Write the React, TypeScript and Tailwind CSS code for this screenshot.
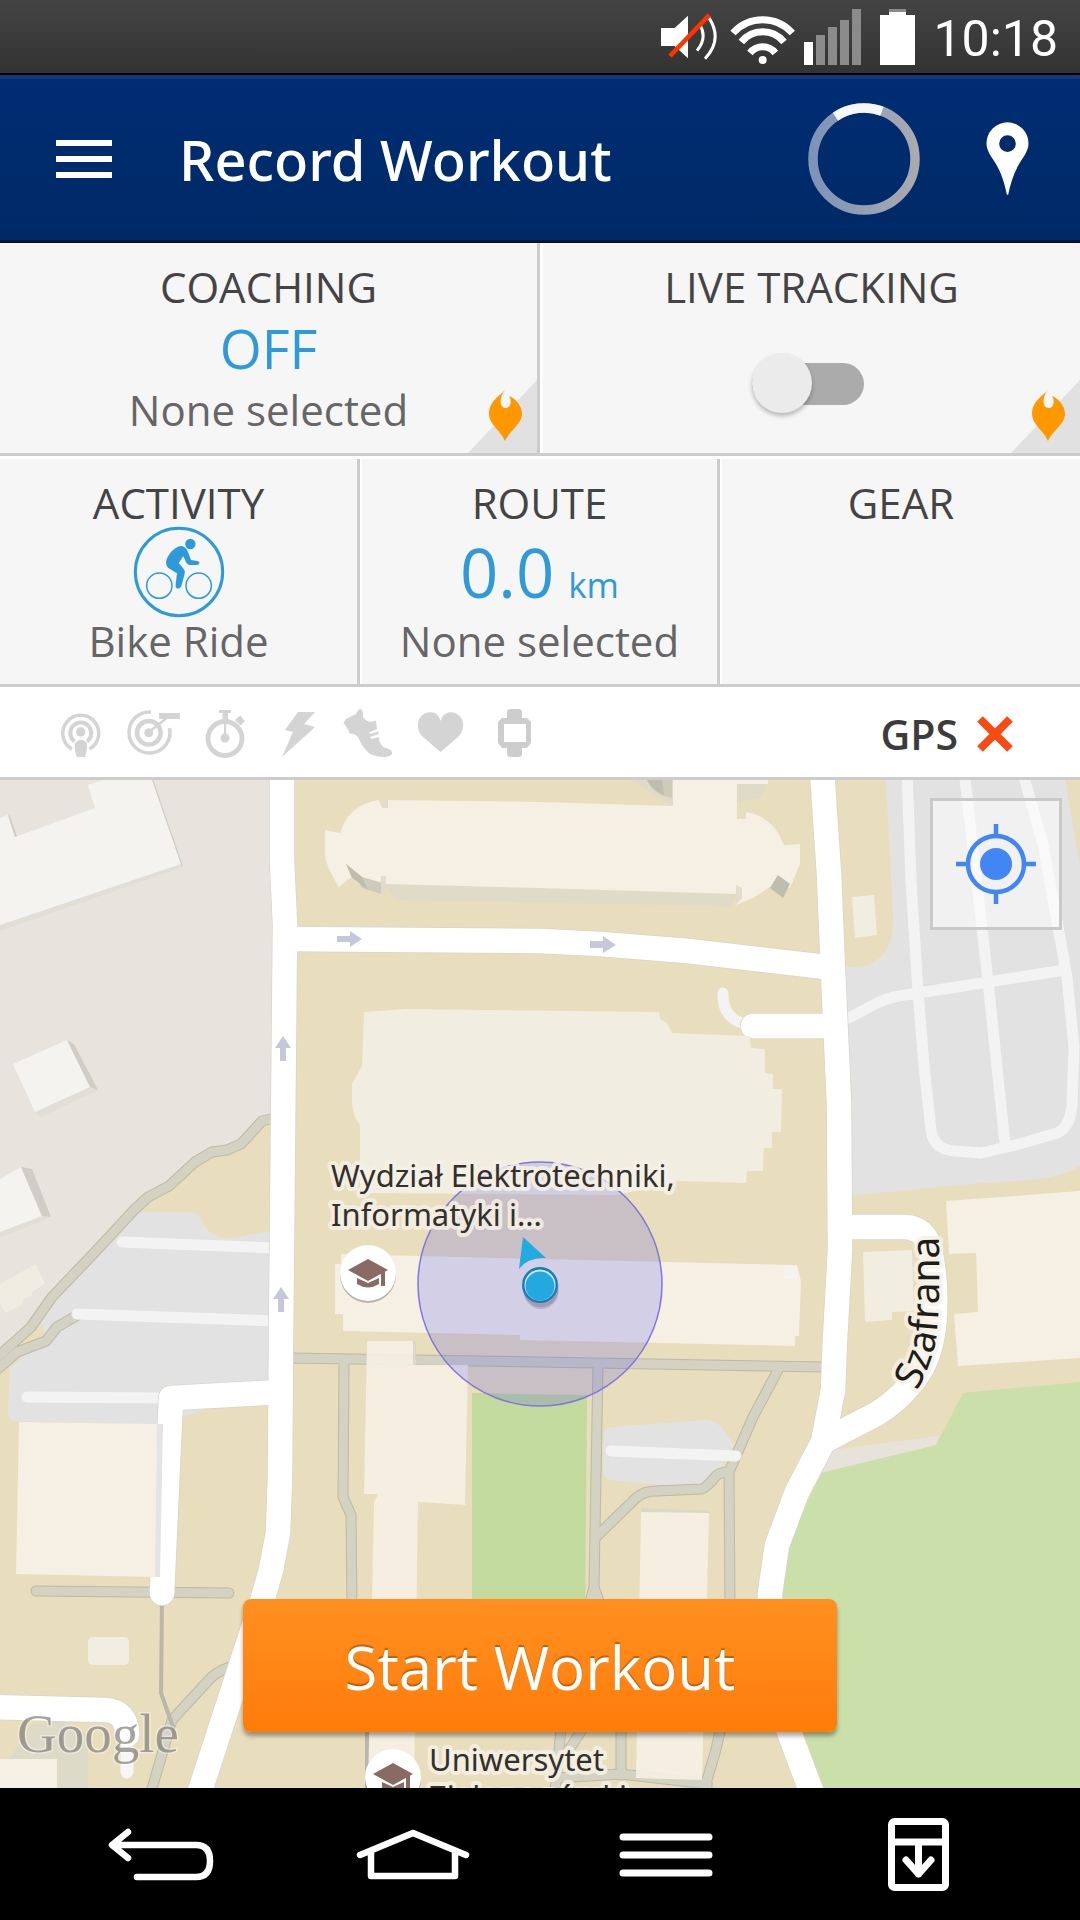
import React from "react";

const sans = "font-['Open_Sans','Noto_Sans',sans-serif]";

function StatusBar() {
  return (
    <div className="flex h-[75px] items-start justify-end border-b-2 border-black bg-linear-to-b from-[#444444] to-[#333333] pr-[22px] text-white">
      <svg viewBox="60 0 174 219" className="mr-3 h-[73px] w-[58px]" role="img" aria-label="Sound off">
        <path fill="#fff" d="M63 84H104L144 47V175L104 138H63Z" />
        <path fill="none" stroke="#fff" strokeWidth="9" d="M178 72Q204 112 171 152M206 52Q250 118 195 176" />
        <path stroke="#ff3300" strokeWidth="14" d="M90 168L208 45" />
      </svg>
      <svg viewBox="270 0 198 219" className="mr-2 h-[73px] w-[66px]" role="img" aria-label="Wi-Fi">
        <g fill="none" stroke="#fff" strokeWidth="21">
          <path d="M279 99A119 119 0 0 1 457 99" />
          <path d="M304 126A82 82 0 0 1 432 126" />
          <path d="M330 159A48 48 0 0 1 406 159" />
        </g>
        <circle cx="368" cy="180" r="12" fill="#fff" />
      </svg>
      <svg viewBox="492 0 171 219" className="mr-[19px] h-[73px] w-[57px]" role="img" aria-label="Signal strength">
        <path fill="#fff" d="M492 126h27v69h-27z" />
        <path fill="#8b8b8b" d="M528 105h27v90h-27zM564 81h27v114h-27zM600 60h27v135h-27zM636 27h27v168h-27z" />
      </svg>
      <svg viewBox="720 0 105 219" className="mr-[18px] h-[73px] w-[35px]" role="img" aria-label="Battery">
        <path fill="#8b8b8b" d="M747 27h51v9h-51z" />
        <path fill="#fff" d="M747 36h51v9h27v150H720V45h27z" />
      </svg>
      <span className="font-[Roboto,sans-serif] text-[50px] leading-[79px]">10:18</span>
    </div>
  );
}

function Header() {
  return (
    <header className="flex h-[168px] items-center border-t-4 border-b-[3px] border-t-[#17377a] border-b-[#011434] bg-linear-to-b from-[#002d73] to-[#002966] pr-[51px] pb-0.5 pl-14 text-white">
      <button type="button" aria-label="Menu" className="flex flex-col gap-2.5">
        <span className="h-1.5 w-14 bg-white" />
        <span className="h-1.5 w-14 bg-white" />
        <span className="h-1.5 w-14 bg-white" />
      </button>
      <h1 className="ml-[67px] flex-1 text-[56px] leading-[76px] font-medium font-['Noto_Sans','Open_Sans',sans-serif]">Record Workout</h1>
      <svg viewBox="0 0 112 112" className="mr-[66px] w-28" role="img" aria-label="Loading">
        <defs>
          <linearGradient id="ring" x1="0" x2="1" y1="0" y2="0">
            <stop offset="0" stopColor="#7d93b8" />
            <stop offset="1" stopColor="#aaaaaf" />
          </linearGradient>
        </defs>
        <circle cx="56" cy="56" r="51" fill="none" stroke="url(#ring)" strokeWidth="9.5" />
        <path fill="none" stroke="#f6f7f9" strokeWidth="9.5" d="M27.500 13.700A51 51 0 0 1 73.900 8.200" />
      </svg>
      <button type="button" aria-label="Show location">
        <svg viewBox="590 97 128 222" className="h-[74px] w-[43px]">
          <path fill="#fff" fillRule="evenodd" d="M654 98A63 63 0 0 1 717 161C717 183 704 199 690 221C672 250 662 285 656 315H652C646 285 636 250 618 221C604 199 591 183 591 161A63 63 0 0 1 654 98ZM654 137a25 25 0 1 0 0 50a25 25 0 1 0 0-50Z" />
        </svg>
      </button>
    </header>
  );
}

function FlameCorner() {
  return (
    <svg viewBox="0 0 69 73" className="absolute right-0 bottom-0 h-[73px] w-[69px]" aria-hidden="true">
      <path fill="#e1e1e1" d="M69 0V73H0Z" />
      <path fill="#ff9800" d="M37 10C32 16 21 21 21 34C21 44 32 50 37 61C42 50 54 44 54 34C54 26 47 18 41 16C44 20 43 28 38 28C31 28 31 17 37 10Z" />
    </svg>
  );
}

function BikeIcon() {
  return (
    <svg viewBox="36 30 276 276" className="w-[92px] shrink-0" aria-hidden="true">
      <g fill="none" stroke="#2f9ad9">
        <circle cx="174" cy="168" r="131" strokeWidth="9" />
        <circle cx="115" cy="209" r="38" strokeWidth="4.500" />
        <circle cx="233" cy="209" r="38" strokeWidth="4.500" />
      </g>
      <circle cx="208" cy="84" r="15.500" fill="#2f9ad9" />
      <path fill="#2f9ad9" d="M163 97Q178 87 189 92Q198 97 202 110L210 132L229 135Q237 137 235 142Q233 148 227 147L205 147Q198 146 195 139L187 121L173 141L186 156Q193 164 191 173L181 211Q176 220 167 217Q162 213 164 205L168 172L143 157Q133 148 136 133Q144 110 163 97Z" />
    </svg>
  );
}

const title = "block text-[42px] leading-[62px] text-[#444444]";
const note = "block text-[42px] leading-[62px] text-[#666666]";

function Panels() {
  return (
    <>
      <section className="grid grid-cols-2 border-b-[3px] border-[#cccccc] bg-[#f6f6f6]">
        <button type="button" className="relative border-r-[3px] border-[#cccccc] pt-[13px] pb-3 text-center">
          <span className={title}>COACHING</span>
          <span className="block text-[54px] leading-[61px] text-[#2f9ad9]">OFF</span>
          <span className={note}>None selected</span>
          <FlameCorner />
        </button>
        <div className="relative flex flex-col items-center border-l-[3px] border-white pt-[13px] pb-3">
          <label htmlFor="live" className={title}>LIVE TRACKING</label>
          <div className="relative mt-[21px] mr-2 h-[90px] w-28 pt-6">
            <input id="live" type="checkbox" role="switch" className="peer block h-[42px] w-28 appearance-none rounded-full bg-[#ababab]" />
            <span className="pointer-events-none absolute top-[14px] left-0 size-[60px] rounded-full bg-[#ebebeb] shadow-[0_3px_4px_rgba(0,0,0,0.25)] peer-checked:left-[52px]" />
          </div>
          <FlameCorner />
        </div>
      </section>
      <section className="grid grid-cols-3 border-t-[3px] border-b-[3px] border-t-white border-b-[#cccccc] bg-[#f6f6f6]">
        <button type="button" className="border-r-[3px] border-[#cccccc] pt-[13px] pb-3">
          <span className={title}>ACTIVITY</span>
          <span className="flex h-[76px] items-center justify-center"><BikeIcon /></span>
          <span className={note}>Bike Ride</span>
        </button>
        <button type="button" className="border-r-[3px] border-l-2 border-r-[#cccccc] border-l-white pt-[13px] pb-3">
          <span className={title}>ROUTE</span>
          <span className="flex h-[76px] items-baseline justify-center gap-3.5 text-[#2f9ad9]">
            <span className="text-[67px] leading-[76px]">0.0</span>
            <span className="text-[35px] leading-[40px]">km</span>
          </span>
          <span className={note}>None selected</span>
        </button>
        <button type="button" className="flex items-start justify-center border-l-2 border-white pt-[13px] pb-3">
          <span className={title}>GEAR</span>
        </button>
      </section>
    </>
  );
}

function SensorBar() {
  const cell = "h-[90px] w-[72px]";
  return (
    <section className="flex items-center border-b-[3px] border-[#cccccc] bg-white pr-[66px] pl-[45px] text-[#d4d4d4]">
      <svg viewBox="45 687 72 90" className={cell} role="img" aria-label="Broadcast">
        <g fill="none" stroke="currentColor">
          <path strokeWidth="3.500" d="M72 749A18 18 0 1 1 89.500 749" />
          <path strokeWidth="4" d="M74.500 741.500A10.500 10.500 0 1 1 87 741.500" />
        </g>
        <circle cx="80.700" cy="732" r="4.700" fill="currentColor" />
        <path fill="currentColor" d="M75 743Q81 736.500 87 743Q87.500 750 85 757H77Q74 750 75 743Z" />
      </svg>
      <svg viewBox="117 687 72 90" className={cell} role="img" aria-label="Cadence">
        <g fill="none" stroke="currentColor">
          <path strokeWidth="3.500" d="M151 712A20.500 20.500 0 1 0 169.500 728" />
          <circle cx="148.800" cy="732.700" r="11.800" strokeWidth="4.500" />
          <path strokeWidth="2.500" d="M149 732L168 717" />
        </g>
        <circle cx="148.800" cy="732.700" r="4.500" fill="currentColor" />
        <path fill="currentColor" d="M159 713h21v6h-21z" />
      </svg>
      <svg viewBox="189 687 72 90" className={cell} role="img" aria-label="Timer">
        <circle cx="225" cy="738.500" r="17" fill="none" stroke="currentColor" strokeWidth="4.800" />
        <path fill="currentColor" d="M219 710h12v3h-3v7h-5.500v-7H219zM235 720l5-4.500l5 5.500l-4.500 4.500zM224 719h2.200v17h-2.200z" />
        <circle cx="225" cy="738" r="4.500" fill="currentColor" />
      </svg>
      <svg viewBox="261 687 72 90" className={cell} role="img" aria-label="Power">
        <path fill="currentColor" d="M298 712H315L304 724L315 727L282 757L293 732L285 730Z" />
      </svg>
      <svg viewBox="333 687 72 90" className={cell} role="img" aria-label="Step sensor">
        <path fill="currentColor" d="M343.500 723L346 719L356 714Q358 709 361 709Q364 712 363 717Q367 724 376 720.500L377 729L369 732.500L370 734L378 731.500L379 734L370 737L371 739L379 737Q379 746 386 748Q393 750 392 754Q390 757 384 757Q371 757 366 750Q361 745 358.500 738Q355 733 350 734Q348 728 343.500 723Z" />
      </svg>
      <svg viewBox="405 687 72 90" className={cell} role="img" aria-label="Heart rate">
        <path fill="currentColor" d="M440.500 721C443 711 453 711 457 714C465 718 465 731 458 737L440.500 752L423 737C416 731 416 718 424 714C429 711 438 711 440.500 721Z" />
      </svg>
      <svg viewBox="477 687 72 90" className={cell} role="img" aria-label="Watch">
        <path fill="#cdcdcd" fillRule="evenodd" d="M507 712Q507 709 511 709H518Q522 709 522 712V718H527L531 722V743L527 748H522V754Q522 757 518 757H511Q507 757 507 754V748H502L498 743V722L502 718H507ZM504 724V742H526V724Z" />
      </svg>
      <div className="ml-auto flex items-center gap-[18px] pt-1">
        <span className="text-[41px] leading-[86px] font-semibold text-[#3c3c3c]">GPS</span>
        <svg viewBox="0 0 38 38" className="w-[38px]" role="img" aria-label="No signal">
          <path stroke="#f94a12" strokeWidth="8" d="M4 4L34 34M34 4L4 34" />
        </svg>
      </div>
    </section>
  );
}

const trails = [
  "M275 1118L262 1121L241 1144L227 1150L212 1152L195 1162L169 1186L148 1197L134 1210L96 1251L52 1297L31 1327L-8 1362",
  "M76 1316L57 1327L46 1341L17 1352L-8 1374",
  "M36 1591L229 1593",
  "M230 1667Q215 1672 207 1682L172 1720L151 1792",
  "M290 1358L540 1362L825 1367",
  "M344 1363L343 1497L351 1515L352 1610",
  "M598 1367L595 1530L594 1587L588 1610",
  "M596 1537L636 1498Q644 1491 656 1491L702 1489Q707 1487 716 1476Q720 1472 729 1472",
  "M778 1370L753 1417L729 1472L730 1610L720 1732L715 1753L707 1780V1792",
  "M594 1587L602 1610",
  "M561 1728L555 1792",
  "M583 1728L567 1753",
  "M621 1728V1775",
  "M556 1778L621 1774L707 1784",
];
const lanes = [
  "M907 770L911 881L918 992L924 1066L931 1130Q934 1150 955 1151L981 1153L1019 1144L1054 1134Q1070 1130 1072 1105L1074 1047L1067 977L1043 844L1022 770",
  "M964 770L988 981L1005 1144",
  "M845 1020L877 1003Q892 996 912 994L988 982L1065 970",
  "M122 1242L275 1248",
  "M77 1314L275 1321",
  "M27 1397L165 1398",
  "M611 1451L736 1456",
  "M723 993Q722 1018 745 1024",
];
const roads = [
  "M282 770V860L285 925L281 1340L280 1477L278 1533L271 1570L263 1598L201 1788L195 1806",
  "M285 939L540 941L600 944L688 951L826 967",
  "M822 770L829 874L833 970L839 1103L840 1250L835 1340L833 1390L823 1442L797 1492L777 1545L770 1593V1640L776 1690L789 1732L810 1788L818 1806",
  "M840 1227H905Q926 1228 930 1250Q934 1270 935 1290Q937 1340 922 1368Q905 1396 878 1413L824 1441",
  "M753 1026H830",
  "M281 1392L171 1398L169 1440L162 1593",
  "M-10 1707L105 1710Q127 1711 127 1735",
];

function Cap({ x, y }: { x: number; y: number }) {
  return (
    <svg x={x - 32} y={y - 32} width="64" height="64" viewBox="-32 -32 64 64">
      <circle cy="2" r="28" fill="#000" opacity="0.250" />
      <circle r="28" fill="#fff" />
      <path fill="#8a6a62" d="M0-14L20-3L0 8L-20-3ZM13 0L17-2V13H13ZM-11 5L0 10L11 5V11Q0 18-11 11Z" />
    </svg>
  );
}

function MapView() {
  return (
    <section className="relative overflow-hidden">
      <svg viewBox="0 780 1080 1008" className="block w-full" role="img" aria-label="Map">
        <path fill="#e8ddbc" d="M0 780H1080V1788H0Z" />
        <path fill="#e8e4dd" d="M0 780H275V1118L241 1144L212 1152L148 1197L96 1251L31 1327L0 1352Z" />
        <path fill="#e2e2e2" d="M134 1212H188Q198 1212 201 1219Q208 1238 230 1238L275 1230V1385L160 1425L12 1421Q8 1418 8 1408L10 1368L46 1338L40 1320L96 1251Z" />
        <path fill="#e2e2e2" d="M886 780L893 915Q894 965 855 967H840L848 1196L970 1184L1030 1180Q1060 1178 1080 1166V866L1065 780Z" />
        <path fill="#e2e2e2" d="M603 1434Q604 1428 612 1427L705 1420Q715 1420 721 1427L734 1444L722 1466L700 1489L610 1480Q603 1479 603 1470Z" />
        <path fill="#cbdfab" d="M1080 1382L963 1393L936 1445L822 1472L780 1560L770 1640L818 1788H1080Z" />
        <path fill="#e8e2dc" d="M831 1450L939 1436L936 1445L820 1473Z" />
        <path fill="#c3da9e" d="M472 1393L587 1395L585 1620H472Z" />
        <path fill="#dedac8" d="M30 1725L60 1720L88 1735V1788H57V1759H10Z" />

        <g fill="none" strokeLinejoin="round" strokeLinecap="round">
          <g stroke="#bcbaa2" strokeWidth="11">{trails.map((d) => <path key={d} d={d} />)}</g>
          <g stroke="#d3d2c3" strokeWidth="9">{trails.map((d) => <path key={d} d={d} />)}</g>
          <path stroke="#bab6ab" strokeWidth="4" d="M162 1600L161 1693L173 1727M367 1730V1790" />
          <g stroke="#f3f3f3" strokeWidth="11">{lanes.map((d) => <path key={d} d={d} />)}</g>
          <path stroke="#f6f6f6" strokeWidth="13" d="M127 1735V1772" />
          <g stroke="#d9d5c6" strokeWidth="26">{roads.map((d) => <path key={d} d={d} />)}</g>
          <g stroke="#fff" strokeWidth="24.500">{roads.map((d) => <path key={d} d={d} />)}</g>
        </g>

        <path fill="#e1ded6" d="M181 864L183 867L0 931V924ZM152 780H154L183 867L181 864ZM35 1112L41 1117L98 1090L90 1087ZM0 1232V1238L51 1217L42 1216Z" />
        <path fill="#f4f3ef" d="M88 785L103 780H152L181 864L0 925V818L8 815L15 837L95 808ZM13 1064L67 1040L90 1087L35 1112ZM0 1179L21 1167L42 1216L0 1232Z" />
        <path fill="#d0cdc7" d="M67 1040L74 1044L98 1090L90 1087ZM21 1167L32 1169L51 1217L42 1216ZM8 815L10 816L17 836L15 837ZM152 780H153L183 866L181 864Z" />
        <path fill="#f1ece2" d="M0 1284L36 1264L45 1284L32 1292V1296L22 1300V1305L5 1313L0 1303Z" />

        <path fill="#dfdbc8" d="M386 884L736 894L731 906L395 900ZM737 784H766L760 798L737 802ZM634 780H673V806L655 797Z" />
        <path fill="#f5efe4" d="M325 830L340 833Q348 805 379 800L382 808H388V800L540 802L673 806V780H768V784H737V819H746V812Q773 816 784 845L800 844V864L790 888L770 887L753 898L736 905V894L540 888L386 884L381 894L362 887L351 877L339 887Q325 865 325 853Z" />
        <path fill="#cfcbbb" d="M346 864L362 877L386 884L381 894L362 888ZM647 780H672V798Q653 795 647 780Z" />
        <path fill="#bfbdae" d="M346 864L362 877L368 890L352 878ZM647 780H662L664 795Q652 790 647 780ZM778 875L790 884L783 898L770 888Z" />
        <path fill="#e3dccd" d="M381 876H386V894H381ZM736 885L742 888V898L736 905ZM382 800L388 800V808H383Z" />
        <path fill="#f1ede1" d="M364 1012L406 1009L659 1012L660 1019L667 1023L672 1033L750 1036L751 1048L765 1049V1073L773 1074V1089H782L781 1132H772V1148H764L763 1171H747L746 1183L678 1181L617 1195L360 1193V1125Q352 1115 352 1099V1084L362 1066Z" />
        <path fill="#f5efe4" d="M341 1254L540 1259L797 1265L801 1281L799 1336H795V1346L520 1340V1335L343 1331V1314H335V1264H341Z" />
        <path fill="#f4f3ef" d="M784 1266H797V1279H784Z" />
        <path fill="#f1ede1" d="M852 897L874 895L877 935L855 938ZM863 1252L912 1250L914 1311L892 1312V1320L865 1322ZM93 1637H124Q129 1637 129 1642V1660Q129 1665 124 1665H93Q88 1665 88 1660V1642Q88 1637 93 1637Z" />
        <path fill="#f5efe4" d="M946 1201L1080 1191V1358L958 1366L954 1314L978 1312L976 1253L949 1254ZM0 1759H57V1788H0Z" />
        <path fill="#e4e4e2" d="M157 1424H163L160 1577H154Z" />
        <path fill="#f5efe4" d="M19 1422L157 1424L155 1577L16 1574Z" />
        <path fill="#dcd8c9" d="M641 1508L709 1511V1513H641ZM413 1341H416V1365H413Z" />
        <path fill="#f5efe4" fillOpacity="0.920" d="M367 1341H413V1365H468L465 1505L418 1502L414 1788H368L372 1598L374 1502L378 1494H364ZM641 1512L709 1513L707 1598L702 1780L636 1778Z" />

        <path fill="#c5c8da" d="M337 936H350V931L362 939L350 947V942H337ZM590 941H603V936L616 945L603 953V948H590ZM283 1036L291 1048H286V1061H280V1048H275ZM281 1287L289 1299H284V1312H278V1299H273Z" />

        <circle cx="540" cy="1284" r="122" fill="#3c3cf0" fillOpacity="0.180" stroke="#8078d8" strokeWidth="1.500" />
        <defs>
          <path id="street" d="M917 1391Q935 1358 937 1330Q941 1290 938 1215" />
        </defs>
        <g className="font-['Noto_Sans',sans-serif]" stroke="#f6f1e6" strokeWidth="8" strokeLinejoin="round" strokeOpacity="0.850" fill="#33302c" style={{ paintOrder: "stroke" }}>
          <text className="text-[31px]" x="331" y="1187">Wydział Elektrotechniki,</text>
          <text className="text-[31px]" x="331" y="1226">Informatyki i...</text>
          <text className="text-[31px]" x="429" y="1771">Uniwersytet</text>
          <text className="text-[31px]" x="429" y="1808">Zielonogórski</text>
          <text className="text-[39px]" fill="#1e1c1a"><textPath href="#street">Szafrana</textPath></text>
        </g>
        <Cap x={368} y={1273} />
        <Cap x={393} y={1777} />

        <path fill="#23aae1" d="M523 1237L546 1258Q528 1257 519 1269Z" />
        <circle cx="541" cy="1292" r="17" fill="#4a3a60" opacity="0.200" />
        <circle cx="541" cy="1289" r="18" fill="#4a3a60" opacity="0.200" />
        <circle cx="540" cy="1285" r="18" fill="#1b7db2" />
        <circle cx="540" cy="1285" r="15.500" fill="#c9edfa" />
        <circle cx="540" cy="1286" r="14.500" fill="#23a9e0" />
        <text className="font-['Liberation_Serif',serif] text-[55px]" x="17" y="1752" fill="#77736a" fillOpacity="0.650" stroke="#fff" strokeOpacity="0.400" strokeWidth="3" style={{ paintOrder: "stroke" }}>Google</text>
      </svg>

      <button type="button" aria-label="My location" className="absolute top-[18px] right-[18px] flex size-[132px] items-center justify-center border-[3px] border-[#c9c9c9] bg-white/50">
        <svg viewBox="0 0 80 80" className="size-20">
          <g fill="none" stroke="#4285f4" strokeWidth="4.500">
            <circle cx="40" cy="40" r="28" />
            <path d="M40 0V12M40 68V80M0 40H12M68 40H80" />
          </g>
          <circle cx="40" cy="40" r="16" fill="#4285f4" />
        </svg>
      </button>

      <div className="absolute inset-x-0 bottom-14 flex justify-center">
        <button type="button" className="w-[55%] rounded-lg bg-linear-to-b from-[#ff9020] to-[#ff7c08] pt-1 text-[60px] leading-[129px] text-white shadow-[0_4px_4px_rgba(0,0,0,0.35)] [text-shadow:0_-2px_1px_rgba(120,60,0,0.5)]">
          Start Workout
        </button>
      </div>
    </section>
  );
}

function NavBar() {
  const nav = "flex h-[132px] items-center justify-center";
  const art = "h-[132px] w-[120px]";
  return (
    <nav className="grid grid-cols-4 bg-black px-[35px]">
      <button type="button" aria-label="Back" className={nav}>
        <svg viewBox="101 1788 120 132" className={art} fill="none" stroke="#fff" strokeWidth="6.500" strokeLinecap="round" strokeLinejoin="round">
          <path d="M128 1832L112 1845L128 1858M114 1845H196Q210 1845 210 1861T196 1877H137" />
        </svg>
      </button>
      <button type="button" aria-label="Home" className={nav}>
        <svg viewBox="354 1788 120 132" className={art} fill="none" stroke="#fff" strokeWidth="6.500" strokeLinecap="round" strokeLinejoin="round">
          <path d="M360 1855L413 1833L466 1855M371 1853V1876H455V1853" />
        </svg>
      </button>
      <button type="button" aria-label="Recent apps" className={nav}>
        <svg viewBox="606 1788 120 132" className={art} fill="none" stroke="#fff" strokeWidth="7" strokeLinecap="round">
          <path d="M623 1837H709M623 1855H709M623 1873H709" />
        </svg>
      </button>
      <button type="button" aria-label="Quick panel" className={nav}>
        <svg viewBox="859 1788 120 132" className={art} fill="none" stroke="#fff" strokeWidth="7" strokeLinecap="round" strokeLinejoin="round">
          <rect x="891.500" y="1821.500" width="54" height="66" rx="3" />
          <path d="M892 1842H945M918.500 1845V1874M906 1860L918.500 1874L931 1860" />
        </svg>
      </button>
    </nav>
  );
}

export default function App() {
  return (
    <div className={`flex min-h-screen flex-col bg-black ${sans}`}>
      <StatusBar />
      <Header />
      <main>
        <Panels />
        <SensorBar />
        <MapView />
      </main>
      <NavBar />
    </div>
  );
}
